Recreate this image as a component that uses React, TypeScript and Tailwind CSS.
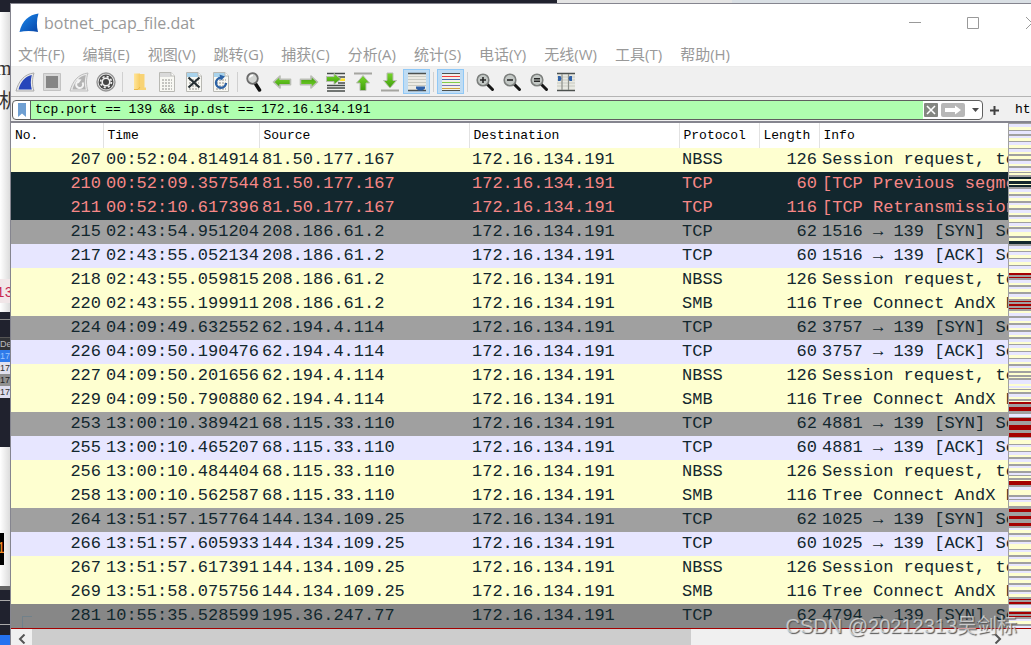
import type { ReactNode } from "react";

type Kind = "smb" | "bad" | "syn" | "tcp" | "sel";

type Packet = {
  no: number;
  time: string;
  src: string;
  proto: string;
  len: number;
  info: string;
  kind: Kind;
};

const rowStyles: Record<Kind, string> = {
  smb: "bg-[#feffd0] text-[#12272e]",
  bad: "bg-[#12272e] text-[#f78787]",
  syn: "bg-[#a0a0a0] text-[#12272e]",
  tcp: "bg-[#e7e6ff] text-[#12272e]",
  sel: "bg-[#878787] text-[#12272e]",
};

const packets: Packet[] = [
  { no: 207, time: "00:52:04.814914", src: "81.50.177.167", proto: "NBSS", len: 126, info: "Session request, to", kind: "smb" },
  { no: 210, time: "00:52:09.357544", src: "81.50.177.167", proto: "TCP", len: 60, info: "[TCP Previous segment", kind: "bad" },
  { no: 211, time: "00:52:10.617396", src: "81.50.177.167", proto: "TCP", len: 116, info: "[TCP Retransmission]", kind: "bad" },
  { no: 215, time: "02:43:54.951204", src: "208.186.61.2", proto: "TCP", len: 62, info: "1516 → 139 [SYN] Seq", kind: "syn" },
  { no: 217, time: "02:43:55.052134", src: "208.186.61.2", proto: "TCP", len: 60, info: "1516 → 139 [ACK] Seq", kind: "tcp" },
  { no: 218, time: "02:43:55.059815", src: "208.186.61.2", proto: "NBSS", len: 126, info: "Session request, to", kind: "smb" },
  { no: 220, time: "02:43:55.199911", src: "208.186.61.2", proto: "SMB", len: 116, info: "Tree Connect AndX Re", kind: "smb" },
  { no: 224, time: "04:09:49.632552", src: "62.194.4.114", proto: "TCP", len: 62, info: "3757 → 139 [SYN] Seq", kind: "syn" },
  { no: 226, time: "04:09:50.190476", src: "62.194.4.114", proto: "TCP", len: 60, info: "3757 → 139 [ACK] Seq", kind: "tcp" },
  { no: 227, time: "04:09:50.201656", src: "62.194.4.114", proto: "NBSS", len: 126, info: "Session request, to", kind: "smb" },
  { no: 229, time: "04:09:50.790880", src: "62.194.4.114", proto: "SMB", len: 116, info: "Tree Connect AndX Re", kind: "smb" },
  { no: 253, time: "13:00:10.389421", src: "68.115.33.110", proto: "TCP", len: 62, info: "4881 → 139 [SYN] Seq", kind: "syn" },
  { no: 255, time: "13:00:10.465207", src: "68.115.33.110", proto: "TCP", len: 60, info: "4881 → 139 [ACK] Seq", kind: "tcp" },
  { no: 256, time: "13:00:10.484404", src: "68.115.33.110", proto: "NBSS", len: 126, info: "Session request, to", kind: "smb" },
  { no: 258, time: "13:00:10.562587", src: "68.115.33.110", proto: "SMB", len: 116, info: "Tree Connect AndX Re", kind: "smb" },
  { no: 264, time: "13:51:57.157764", src: "144.134.109.25", proto: "TCP", len: 62, info: "1025 → 139 [SYN] Seq", kind: "syn" },
  { no: 266, time: "13:51:57.605933", src: "144.134.109.25", proto: "TCP", len: 60, info: "1025 → 139 [ACK] Seq", kind: "tcp" },
  { no: 267, time: "13:51:57.617391", src: "144.134.109.25", proto: "NBSS", len: 126, info: "Session request, to", kind: "smb" },
  { no: 269, time: "13:51:58.075756", src: "144.134.109.25", proto: "SMB", len: 116, info: "Tree Connect AndX Re", kind: "smb" },
  { no: 281, time: "10:55:35.528599", src: "195.36.247.77", proto: "TCP", len: 62, info: "4794 → 139 [SYN] Seq", kind: "sel" },
];

const menus = ["文件(F)", "编辑(E)", "视图(V)", "跳转(G)", "捕获(C)", "分析(A)", "统计(S)", "电话(Y)", "无线(W)", "工具(T)", "帮助(H)"];

const columns = [
  { name: "No.", width: "w-[92px]" },
  { name: "Time", width: "w-[156px]" },
  { name: "Source", width: "w-[210px]" },
  { name: "Destination", width: "w-[210px]" },
  { name: "Protocol", width: "w-[80px]" },
  { name: "Length", width: "w-[60px]" },
  { name: "Info", width: "w-auto" },
];

// Packet overview next to the list: start and height of each band
const G = "#a0a0a0";
const L = "#e7e6ff";
const D = "#12272e";
const R = "#a40000";
const bands: [number, number, string][] = [
  [0, 1, G], [1, 3, L], [7, 1, G], [8, 3, L], [11, 2, G], [13, 2, L], [18, 1, G], [19, 3, L], [25, 1, G], [26, 3, L],
  [31, 2, G], [36, 2, G], [38, 3, L], [43, 2, G], [45, 3, L], [49, 1, G], [52, 2, G], [54, 2, D], [58, 3, D], [62, 2, D],
  [64, 2, G], [66, 3, L], [71, 2, G], [73, 2, L], [78, 2, G], [80, 2, L], [85, 2, G], [87, 3, L], [92, 2, G], [94, 2, L],
  [99, 1, G], [100, 3, L], [104, 2, G], [106, 3, L], [113, 2, G], [118, 3, D], [121, 2, G], [123, 3, L], [128, 1, G],
  [129, 3, L], [135, 1, G], [136, 3, L], [142, 1, G], [143, 3, L], [150, 2, R], [152, 2, G], [154, 1, R], [155, 2, G],
  [157, 3, L], [162, 2, G], [164, 2, L], [169, 2, G], [171, 3, L], [176, 2, G], [178, 1, R], [179, 2, G], [181, 2, R],
  [183, 2, G], [185, 1, R], [186, 2, G], [190, 3, L], [193, 2, G], [195, 3, L], [200, 2, G], [202, 3, L], [207, 2, G],
  [209, 3, L], [214, 2, G], [216, 3, L], [221, 1, G], [222, 3, L], [228, 1, G], [229, 3, L], [235, 1, G], [236, 3, L],
  [241, 2, G], [243, 2, L], [248, 2, G], [252, 2, G], [255, 2, G], [257, 4, L], [263, 2, L], [266, 1, G], [269, 2, G],
  [271, 3, L], [276, 2, G], [279, 2, R], [281, 3, G], [284, 4, R], [288, 3, G], [291, 3, L], [294, 1, G], [295, 3, R],
  [298, 4, G], [302, 5, R], [307, 3, G], [310, 4, R], [314, 1, G], [315, 2, L], [321, 1, G], [322, 2, L], [328, 1, G],
  [329, 3, L], [334, 2, G], [336, 3, L], [341, 2, G], [343, 2, L], [348, 2, G], [350, 2, L], [352, 1, G], [355, 2, G],
  [358, 4, R], [362, 2, G], [364, 3, L], [372, 2, G], [374, 2, L], [376, 1, G], [377, 2, L], [383, 3, G], [386, 3, R],
  [389, 4, G], [393, 3, R], [396, 4, G], [400, 3, R], [403, 2, G], [405, 2, L], [410, 2, G], [412, 2, L], [417, 2, G],
  [419, 2, L], [426, 1, G], [427, 2, L], [432, 2, G], [434, 2, L], [439, 2, G], [441, 2, L], [446, 2, G], [448, 2, L],
  [453, 2, G], [455, 2, L], [460, 2, G], [462, 2, L], [467, 2, G], [469, 2, L], [474, 2, G], [476, 1, R], [477, 2, G],
  [479, 2, R], [481, 1, G], [482, 3, L], [488, 1, G], [489, 2, R], [491, 2, G], [493, 1, R], [494, 2, G], [496, 2, L],
  [501, 2, G], [503, 2, L], [505, 1, R],
];

const Icon = ({ children }: { children: ReactNode }) => (
  <svg width="20" height="20" viewBox="0 0 20 20" aria-hidden="true">
    {children}
  </svg>
);

const Defs = () => (
  <svg width="0" height="0" className="absolute" aria-hidden="true">
    <defs>
      <linearGradient id="fin" x1="0" y1="0" x2="1" y2="1">
        <stop offset="0" stopColor="#1b8cf0" />
        <stop offset="1" stopColor="#0844a6" />
      </linearGradient>
      <linearGradient id="green" x1="0" y1="0" x2="0" y2="1">
        <stop offset="0" stopColor="#77d62c" />
        <stop offset="1" stopColor="#3f9d0b" />
      </linearGradient>
      <linearGradient id="folder" x1="0" y1="0" x2="1" y2="0">
        <stop offset="0" stopColor="#ffe59a" />
        <stop offset="1" stopColor="#f8cd62" />
      </linearGradient>
    </defs>
  </svg>
);

const Fin = ({ fill, edge }: { fill: string; edge: string }) => (
  <>
    <path d="M1 19C3.5 9.500 9 2 19 1C17 7 17 13 19 19Z" fill="#e9e9e9" stroke={edge} strokeWidth="1" />
    <path d="M3.500 17.500C5.500 10 10 4.500 16.800 3C15.500 8 15.500 13 16.800 17.500Z" fill={fill} />
  </>
);

const Page = ({ tone }: { tone: string }) => (
  <>
    <path d="M2.500 .5H14L17.500 4V19.500H2.500Z" fill="#f8f8f3" stroke="#b9b9b4" />
    <path d="M3 1H14V5H3Z" fill={tone} />
    <path d="M14 .5V4H17.500" fill="#fff" stroke="#b9b9b4" />
    <path d="M5 8H15M5 11H15M5 14H15M5 17H15" stroke="#c4c4c0" strokeWidth="2" strokeDasharray="2 1" />
  </>
);

const Lens = ({ children }: { children?: ReactNode }) => (
  <>
    <path d="M12 12L17.500 17.500" stroke="#171717" strokeWidth="3" strokeLinecap="round" />
    <circle cx="8" cy="8" r="5.800" fill="#c3c8c5" stroke="#7b7e7c" strokeWidth="1.600" />
    {children}
  </>
);

const Arrow = ({ turn }: { turn: number }) => (
  <path
    d="M1.500 10L8 4V7.200H18.500V12.800H8V16Z"
    transform={`rotate(${turn} 10 10)`}
    fill="url(#green)"
    stroke="#b9bdb4"
    strokeWidth="1.600"
    strokeLinejoin="round"
  />
);

const Tool = ({ label, active, children }: { label: string; active?: boolean; children: ReactNode }) => (
  <button
    type="button"
    aria-label={label}
    className={
      active
        ? "flex h-[25px] w-[27px] items-center justify-center border border-[#90c8f6] bg-[#bfdcf3]"
        : "flex h-[25px] w-[27px] items-center justify-center"
    }
  >
    <Icon>{children}</Icon>
  </button>
);

const Divider = () => <div className="mx-[3px] h-5 w-px bg-[#d0d0d0]" />;

const Toolbar = () => (
  <div className="flex h-[30px] items-center border-b border-[#b4b4b4] bg-[#f0f0f0]">
    <Tool label="Start capture"><Fin fill="#2746ba" edge="#aaaaaa" /></Tool>
    <Tool label="Stop capture">
      <path d="M1.500 1.500H18.500V18.500H1.500Z" fill="#d9d9d9" stroke="#c2c2c2" />
      <path d="M4 4H16V16H4Z" fill="#858585" />
    </Tool>
    <Tool label="Restart capture">
      <Fin fill="#b3b3b3" edge="#bdbdbd" />
      <path d="M9 9.500A3.500 3.500 0 1 0 13.500 10.500" fill="none" stroke="#f3f3f3" strokeWidth="2" />
      <path d="M7.500 7L12.500 7.500L9.500 11.500Z" fill="#f3f3f3" />
    </Tool>
    <Tool label="Capture options">
      <circle cx="10" cy="10" r="9" fill="#f1f1f1" stroke="#969696" strokeWidth="1.400" />
      <circle cx="10" cy="10" r="7.500" fill="#4c4c4c" />
      <circle cx="10" cy="10" r="3.800" fill="#444" stroke="#f1f1f1" strokeWidth="1.600" />
      <circle cx="10" cy="10" r="5.400" fill="none" stroke="#f1f1f1" strokeWidth="1.600" strokeDasharray="2.100 2.140" />
    </Tool>
    <Divider />
    <Tool label="Open">
      <path d="M4 1.500H10V18H4Z" fill="url(#folder)" />
      <path d="M10 2H14.500V15.500H16V18H10Z" fill="#f8d375" />
      <path d="M4 17.500H8L10 15" fill="none" stroke="#eab94b" />
    </Tool>
    <Tool label="Save"><Page tone="#d9d9d9" /></Tool>
    <Tool label="Close">
      <Page tone="#a9d3ec" />
      <path d="M4.500 5.500L15.500 15.500M15.500 5.500L4.500 15.500" stroke="#262f33" strokeWidth="2.200" />
    </Tool>
    <Tool label="Reload">
      <Page tone="#a9d3ec" />
      <path d="M10 5.800A5 5 0 1 0 15 11" fill="none" stroke="#2c62a5" strokeWidth="2.400" />
      <path d="M8.500 2.500L14 4.500L10 8.500Z" fill="#2c62a5" />
    </Tool>
    <Divider />
    <Tool label="Find packet">
      <path d="M10 11L14.500 18" stroke="#111" strokeWidth="3.500" strokeLinecap="round" />
      <circle cx="7.500" cy="6.500" r="5.300" fill="#d2d4d2" stroke="#6c6c6c" strokeWidth="1.800" />
      <path d="M4.500 5.500A3.500 3.500 0 0 1 8 3.500" fill="none" stroke="#fff" strokeWidth="1.500" />
    </Tool>
    <Tool label="Previous packet"><Arrow turn={0} /></Tool>
    <Tool label="Next packet"><Arrow turn={180} /></Tool>
    <Tool label="Go to packet">
      <path d="M1 1.500H19M12 5H19M12 11H19M1 13.500H19M1 16H19M1 19H19" stroke="#454b48" strokeWidth="1.300" />
      <path d="M14 6.500H19V9H14Z" fill="#ffe329" />
      <path d="M.5 4.500H8V1.500L15 7L8 12.500V9.500H.5Z" fill="url(#green)" stroke="#b8bdb4" />
    </Tool>
    <Tool label="First packet">
      <path d="M1 1.500H19" stroke="#a5a5a0" strokeWidth="2" />
      <path d="M10 3.500L16.500 11H13V18.500H7V11H3.500Z" fill="url(#green)" stroke="#b9bdb4" />
    </Tool>
    <Tool label="Last packet">
      <path d="M1 18.500H19" stroke="#a5a5a0" strokeWidth="2" />
      <path d="M10 16L3.500 8.500H7V1H13V8.500H16.500Z" fill="url(#green)" stroke="#b9bdb4" />
    </Tool>
    <Tool label="Auto scroll" active>
      <path d="M1 1H19V19H1Z" fill="#ecebe4" />
      <path d="M1 1.500H19M1 18.500H19" stroke="#4c514f" strokeWidth="1.300" />
      <path d="M1 4.500H19M1 7.500H19M1 10.500H19M1 13.500H19" stroke="#c9cac2" />
      <path d="M9 14.500H18V16.500L15.500 18.500H11.500L9 16.500Z" fill="#2f61a8" />
    </Tool>
    <Divider />
    <Tool label="Colorize" active>
      <path d="M1 1H19V19H1Z" fill="#f1f0e9" />
      <path d="M1 1.500H19M1 18.500H19" stroke="#4c514f" />
      <path d="M1 4.500H19" stroke="#ef3b3b" />
      <path d="M1 7.500H19" stroke="#4565ad" />
      <path d="M1 10.500H19" stroke="#80cc4a" />
      <path d="M1 13.500H19" stroke="#7b72b5" />
      <path d="M1 16.500H19" stroke="#d1a23c" />
    </Tool>
    <Divider />
    <Tool label="Zoom in"><Lens><path d="M5 8H11M8 5V11" stroke="#272727" strokeWidth="1.600" /></Lens></Tool>
    <Tool label="Zoom out"><Lens><path d="M5 8H11" stroke="#272727" strokeWidth="1.600" /></Lens></Tool>
    <Tool label="Normal size"><Lens><path d="M5 6.800H11M5 9.200H11" stroke="#272727" strokeWidth="1.400" /></Lens></Tool>
    <Tool label="Resize columns">
      <path d="M1 1H19V19H1Z" fill="#e8e9e2" />
      <path d="M1 5H19M1 8H19M1 11H19M1 14H19" stroke="#c9cac2" />
      <path d="M1 1.500H19M1 18.500H19" stroke="#4c514f" strokeWidth="1.300" />
      <path d="M6 2V18M12.500 2V18" stroke="#8d908a" strokeWidth="1.200" />
      <path d="M2 4H4.500L5.500 6.500L4.500 9H2ZM16 4H13.500L12.500 6.500L13.500 9H16Z" fill="#2f61a8" />
    </Tool>
  </div>
);

const FilterBar = () => (
  <div className="flex h-[26px] items-center overflow-hidden border-b-2 border-[#85858f] bg-[#f0f0f0] pt-[2px] pl-px font-['Liberation_Mono',monospace] text-[13px]">
    <div className="flex h-5 min-w-0 flex-1 items-stretch overflow-hidden rounded-[4px] border border-[#5f5f5f] bg-white">
      <button type="button" aria-label="Bookmarks" className="flex w-[18px] shrink-0 items-center justify-center border-r border-[#5f5f5f]">
        <svg width="8" height="14" viewBox="0 0 8 14" aria-hidden="true">
          <path d="M0 0H8V14L4 10.500L0 14Z" fill="#6f9fd2" />
        </svg>
      </button>
      <input
        aria-label="Display filter"
        defaultValue="tcp.port == 139 && ip.dst == 172.16.134.191"
        className="min-w-0 flex-1 bg-[#afffaf] pl-[4px] text-black outline-none"
      />
      <div className="flex items-center gap-[3px] pr-[2px] pl-px">
        <button type="button" aria-label="Clear filter">
          <svg width="14" height="14" viewBox="0 0 14 14" aria-hidden="true">
            <rect width="14" height="14" rx="1" fill="#848681" />
            <path d="M3 3L11 11M11 3L3 11" stroke="#fff" strokeWidth="1.600" />
          </svg>
        </button>
        <button type="button" aria-label="Apply filter">
          <svg width="24" height="14" viewBox="0 0 24 14" aria-hidden="true">
            <rect width="24" height="14" rx="2" fill="#b7b7b7" />
            <path d="M4 5H14V2.500L20 7L14 11.500V9H4Z" fill="#fff" />
          </svg>
        </button>
        <button type="button" aria-label="Recent filters" className="flex w-3 justify-end">
          <svg width="9" height="5" viewBox="0 0 9 5" aria-hidden="true">
            <path d="M1 0H8L4.500 4Z" fill="#4b4b4b" />
          </svg>
        </button>
      </div>
    </div>
    <button type="button" aria-label="Add filter button" className="flex w-[22px] justify-center">
      <svg width="9" height="9" viewBox="0 0 9 9" aria-hidden="true">
        <path d="M4.500 0V9M0 4.500H9" stroke="#404040" strokeWidth="2" />
      </svg>
    </button>
    <button type="button" className="w-[26px] overflow-hidden pl-[10px] text-left text-black">ht</button>
  </div>
);

const PacketList = () => (
  <div className="flex">
    <div className="min-w-0 flex-1 overflow-hidden bg-white">
      <table className="w-full table-fixed border-collapse">
        <thead>
          <tr className="h-[25px]">
            {columns.map((c) => (
              <th
                key={c.name}
                className={`${c.width} border-r border-[#e2e2e2] p-0 pl-1 text-left font-['Liberation_Mono',monospace] text-[13px] leading-6 font-normal text-black last:border-r-0`}
              >
                {c.name}
              </th>
            ))}
          </tr>
        </thead>
        <tbody className="font-['Liberation_Mono',monospace] text-[17px] leading-6 whitespace-nowrap">
          {packets.map((p) => (
            <tr key={p.no} className={`${rowStyles[p.kind]} h-6`}>
              <td className="relative p-0 pr-[2px] text-right">
                {p.kind === "sel" && <span className="absolute top-3 left-[11px] h-3 w-[10px] border-t border-l border-[#71818a]" />}
                {p.no}
              </td>
              <td className="p-0 pl-[3px]">{p.time}</td>
              <td className="p-0 pl-[3px]">{p.src}</td>
              <td className="p-0 pl-[3px]">172.16.134.191</td>
              <td className="p-0 pl-[3px]">{p.proto}</td>
              <td className="p-0 pr-[2px] text-right">{p.len}</td>
              <td className="overflow-hidden p-0 pl-[3px]">{p.info}</td>
            </tr>
          ))}
        </tbody>
      </table>
      <div className="h-px bg-[#a40000]" />
    </div>
    <svg width="23" height="506" viewBox="0 0 23 506" shapeRendering="crispEdges" className="shrink-0 self-start" aria-hidden="true">
      <rect width="23" height="506" fill="#feffd0" />
      {bands.map(([y, h, fill]) => (
        <rect key={y} x="0" y={y} width="23" height={h} fill={fill} />
      ))}
      <rect width="1" height="506" fill="#a0a0a0" />
    </svg>
  </div>
);

const ScrollBar = () => (
  <div className="flex h-4 items-stretch overflow-hidden bg-[#f0f0f0]">
    <button type="button" aria-label="Scroll left" className="flex w-[21px] items-center justify-center pt-1">
      <svg width="8" height="10" viewBox="0 0 8 10" aria-hidden="true">
        <path d="M6.500 .5L2 5L6.500 9.500" fill="none" stroke="#555" strokeWidth="2" />
      </svg>
    </button>
    <div className="flex-1">
      <div className="h-full w-[69%] bg-[#cdcdcd]" />
    </div>
    <button type="button" aria-label="Scroll right" className="mr-[23px] flex w-[21px] items-center justify-center pt-1">
      <svg width="8" height="10" viewBox="0 0 8 10" aria-hidden="true">
        <path d="M1.500 .5L6 5L1.500 9.500" fill="none" stroke="#555" strokeWidth="2" />
      </svg>
    </button>
  </div>
);

// Sliver of the desktop that shows to the left of the window
const Backdrop = () => (
  <div className="flex w-[10px] shrink-0 flex-col overflow-hidden bg-linear-to-r from-white to-[#dcdcdc] whitespace-nowrap">
    <div className="h-[9px] shrink-0 bg-[#20222e]" />
    <div className="h-[68px] shrink-0 pt-11 font-['Liberation_Serif',serif] text-xl leading-6 text-[#333]">
      <span className="-ml-1">m</span>
    </div>
    <div className="h-[199px] shrink-0 pt-1 font-['Noto_Sans_CJK_SC',sans-serif] text-xl leading-8 text-[#333]">
      <span className="-ml-px">机</span>
    </div>
    <div className="h-6 shrink-0 bg-[#f1e6e8] font-['Liberation_Mono',monospace] text-sm leading-7 text-[#c7254e]">
      <span className="-ml-1">13</span>
    </div>
    <div className="h-[9px] shrink-0" />
    <div className="h-[26px] shrink-0 border-b border-[#555] bg-[#20222e] pt-[7px]">
      <div className="h-px bg-[#8a8a8a]" />
    </div>
    <div className="flex shrink-0 flex-col font-['Liberation_Sans',sans-serif] text-[9px] leading-3">
      <span className="bg-[#303236] text-[#bbb]">Des</span>
      <span className="bg-[#2f7bea] text-[#9cc4ff]">172</span>
      <span className="bg-[#e2e2ee] text-[#333]">172</span>
      <span className="bg-[#909090] text-[#222]">172</span>
      <span className="bg-[#dcdcee] text-[#333]">172</span>
    </div>
    <div className="h-[49px] shrink-0 bg-[#20222e]" />
    <div className="h-[86px] shrink-0" />
    <div className="h-8 w-1 shrink-0 overflow-hidden bg-black font-['Liberation_Mono',monospace] text-base leading-8 text-[#f08a24]">
      <span className="-ml-1">1</span>
    </div>
    <div className="h-[21px] shrink-0" />
    <div className="flex h-[49px] shrink-0 flex-col justify-between border-t-4 border-[#666] bg-[#20222e] py-[10px]">
      <div className="h-px bg-[#aaa]" />
      <div className="h-px bg-[#aaa]" />
    </div>
    <div className="flex-1 bg-[#2472f0]" />
  </div>
);

export default function App() {
  return (
    <div className="relative flex min-h-screen flex-col overflow-hidden bg-[#f0f0f0]">
      <Defs />
      <div className="flex h-[3px]">
        <div className="w-[54%] bg-[#20222e]" />
        <div className="w-[17%] bg-[#e4e4e4]" />
        <div className="flex-1 bg-[#d9dfe4]" />
      </div>
      <div className="flex flex-1">
        <Backdrop />
        <main className="min-w-0 flex-1 border-t border-l border-[#85858f] bg-white">
          <header className="flex h-[37px] items-center overflow-hidden pl-2 text-[#999]">
            <svg width="20" height="20" viewBox="0 0 20 20" aria-hidden="true">
              <path d="M.5 19C3 8 10 1.500 19.500 .5C17.500 7 17.500 13 19 19C13 17.500 6 17.500 .5 19Z" fill="url(#fin)" />
            </svg>
            <h1 className="ml-[5px] flex-1 font-['Open_Sans',sans-serif] text-base">botnet_pcap_file.dat</h1>
            <button type="button" aria-label="Minimize" className="flex w-[58px] justify-center">
              <svg width="12" height="12" viewBox="0 0 12 12" aria-hidden="true"><path d="M0 5.500H12" stroke="#999" /></svg>
            </button>
            <button type="button" aria-label="Maximize" className="flex w-[58px] justify-center">
              <svg width="12" height="12" viewBox="0 0 12 12" aria-hidden="true"><path d="M.5 .5H11.500V11.500H.5Z" fill="none" stroke="#999" /></svg>
            </button>
            <button type="button" aria-label="Close window" className="flex w-[29px] justify-end overflow-hidden pl-6">
              <svg width="5" height="12" viewBox="0 0 5 12" aria-hidden="true"><path d="M0 0L12 12M0 12L12 0" stroke="#999" /></svg>
            </button>
          </header>
          <nav className="flex h-[26px] items-center gap-[18px] border-b border-[#ededed] pl-[7px] font-['Open_Sans','Noto_Sans_CJK_SC',sans-serif] text-[15px] leading-6 whitespace-nowrap text-[#999]">
            {menus.map((m) => (
              <button key={m} type="button">{m}</button>
            ))}
          </nav>
          <Toolbar />
          <FilterBar />
          <PacketList />
          <ScrollBar />
        </main>
      </div>
      <div className="pointer-events-none absolute right-[14px] bottom-[3px] font-['Liberation_Sans','Noto_Sans_CJK_SC',sans-serif] text-xl leading-8 text-white/60 [text-shadow:1px_1px_1px_#555]">
        CSDN @20212313吴剑标
      </div>
    </div>
  );
}
